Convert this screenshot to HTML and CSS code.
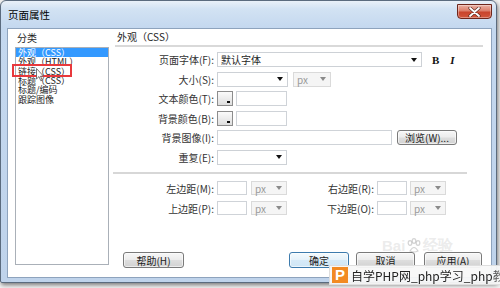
FILE: index.html
```html
<!DOCTYPE html>
<html>
<head>
<meta charset="utf-8">
<link rel="stylesheet" href="styles.css">
</head>
<body>
<div class="win">
  <div class="titlebar">
    <span class="title">页面属性</span>
    <div class="close">
      <svg width="13" height="10" viewBox="0 0 13 10"><path d="M2 1 L11 9 M11 1 L2 9" stroke="#5a2a22" stroke-width="3.2" stroke-linecap="round"/><path d="M2 1 L11 9 M11 1 L2 9" stroke="#fff" stroke-width="1.8" stroke-linecap="round"/></svg>
    </div>
  </div>
  <div class="client">
    <div class="leftcol">
      <div class="cat-label">分类</div>
      <div class="listbox">
        <div class="item sel">外观（CSS）</div>
        <div class="item">外观（HTML）</div>
        <div class="item">链接（CSS）</div>
        <div class="item">标题（CSS）</div>
        <div class="item">标题/编码</div>
        <div class="item">跟踪图像</div>
        <div class="redbox"></div>
        <svg class="cursor" width="8" height="14" viewBox="0 0 8 14"><path d="M0.5 0.5 L0.5 11 L3 8.6 L4.8 12.8 L6.2 12.2 L4.5 8.2 L7.5 8.2 Z" fill="#fff" stroke="#555" stroke-width="0.8"/></svg>
      </div>
    </div>
    <div class="rightcol">
      <div class="heading">外观（CSS）</div>
      <div class="rule"></div>
      <div class="rows">
        <div class="row">
          <span class="lbl">页面字体(F):</span>
          <div class="select w205"><span class="val">默认字体</span><span class="arrow"></span></div>
          <span class="fmt bold">B</span>
          <span class="fmt ital">I</span>
        </div>
        <div class="row">
          <span class="lbl">大小(S):</span>
          <div class="select w71"><span class="val"></span><span class="arrow"></span></div>
          <div class="select dis w38 ml5"><span class="val">px</span><span class="arrow"></span></div>
        </div>
        <div class="row">
          <span class="lbl">文本颜色(T):</span>
          <div class="swatch"><span class="dot"></span></div>
          <div class="input w51 ml3"></div>
        </div>
        <div class="row">
          <span class="lbl">背景颜色(B):</span>
          <div class="swatch"><span class="dot"></span></div>
          <div class="input w51 ml3"></div>
        </div>
        <div class="row">
          <span class="lbl">背景图像(I):</span>
          <div class="input w175"></div>
          <div class="btn browse">浏览(W)...</div>
        </div>
        <div class="row">
          <span class="lbl">重复(E):</span>
          <div class="select w70"><span class="val"></span><span class="arrow"></span></div>
        </div>
      </div>
      <div class="rule2"></div>
      <div class="mrows">
        <div class="mrow">
          <span class="lbl">左边距(M):</span>
          <div class="input w30"></div>
          <div class="select dis w36 ml4"><span class="val">px</span><span class="arrow"></span></div>
          <span class="lbl2">右边距(R):</span>
          <div class="input w30"></div>
          <div class="select dis w36 ml3"><span class="val">px</span><span class="arrow"></span></div>
        </div>
        <div class="mrow">
          <span class="lbl">上边距(P):</span>
          <div class="input w30"></div>
          <div class="select dis w36 ml4"><span class="val">px</span><span class="arrow"></span></div>
          <span class="lbl2">下边距(O):</span>
          <div class="input w30"></div>
          <div class="select dis w36 ml3"><span class="val">px</span><span class="arrow"></span></div>
        </div>
      </div>
      <div class="buttons">
        <div class="btn help">帮助(H)</div>
        <div class="btngroup">
          <div class="btn def ok">确定</div>
          <div class="btn cancel">取消</div>
          <div class="btn apply">应用(A)</div>
        </div>
      </div>
    </div>
  </div>
</div>
<div class="baidu">Bai<svg width="16" height="16" viewBox="0 0 16 16"><g fill="none" stroke="rgba(170,170,170,.5)" stroke-width="1.2"><ellipse cx="4" cy="5" rx="1.8" ry="2.4"/><ellipse cx="8" cy="3" rx="1.8" ry="2.4"/><ellipse cx="12" cy="5" rx="1.8" ry="2.4"/><path d="M4 13 Q8 6 12 13 Q8 15 4 13Z"/></g></svg>经验</div>
<div class="banner">
  <span class="plogo">P</span>
  <span class="btext">自学PHP网_php学习_php教</span>
</div>
</body>
</html>
```
FILE: styles.css
```css
* { box-sizing: border-box; margin: 0; padding: 0; }
body {
  width: 500px; height: 288px; overflow: hidden; position: relative;
  background: #f2f2f2;
  font-family: "Noto Sans CJK SC", "Noto Sans", sans-serif;
  font-size: 10px; color: #1e1e1e;
}
.win {
  width: 497px; height: 283px;
  border: 1px solid #5b6b7e;
  border-radius: 6px 6px 2px 2px;
  background: linear-gradient(180deg, #e9f0f8 0px, #d2e2f3 8px, #c4d8ef 27px, #bfd3eb 100%);
  box-shadow: 1px 2px 4px rgba(0,0,0,.5);
  display: flex; flex-direction: column;
}
.titlebar { height: 27px; display: flex; align-items: flex-start; padding-left: 7px; }
.title { font-size: 10.5px; line-height: 27px; color: #000; }
.close {
  margin-left: auto; margin-right: 4px; margin-top: 3px;
  width: 35px; height: 15px;
  border: 1px solid #6e261b; border-radius: 0 0 4px 4px;
  background: linear-gradient(180deg, #eab1a4 0%, #dc7e6a 45%, #c9442c 55%, #d2563b 100%);
  box-shadow: inset 0 0 0 1px rgba(255,255,255,.35);
  display: flex; align-items: center; justify-content: center;
}
.client {
  height: 250px; margin: 0 4px 0 6px;
  background: #fff; border: 1px solid #8ea3bd;
  display: flex;
}
.leftcol { margin-left: 7px; width: 94px; display: flex; flex-direction: column; }
.cat-label { height: 18px; line-height: 18px; padding-left: 2px; }
.listbox { position: relative; height: 218px; border: 1px solid #aab0b8; }
.item { height: 9.33px; line-height: 9.33px; font-size: 9px; padding-left: 2px; white-space: nowrap; color: #222; }
.item.sel { background: #3399ff; color: #fff; }
.redbox { position: absolute; left: -4px; top: 16px; width: 60px; height: 13px; border: 2px solid #e8393c; }
.cursor { position: absolute; left: 20px; top: 20px; }
.rightcol { margin-left: 6px; width: 368px; display: flex; flex-direction: column; }
.heading { height: 16px; line-height: 16px; padding-left: 2px; }
.rule { height: 2px; background: #d9d9d9; }
.rows { margin-top: 5px; display: flex; flex-direction: column; gap: 4.5px; }
.row { height: 15px; display: flex; align-items: center; }
.lbl { width: 102px; padding-right: 3px; text-align: right; white-space: nowrap; color: #333; }
.lbl2 { width: 90px; padding-right: 3px; text-align: right; white-space: nowrap; color: #333; }
.select {
  height: 100%; display: flex; align-items: center; justify-content: space-between;
  background: #fff; border: 1px solid #cdd1d6; padding: 0 4px 0 3px;
}
.select .val { line-height: 13px; }
.arrow { width: 0; height: 0; border-left: 3px solid transparent; border-right: 3px solid transparent; border-top: 4px solid #111; }
.select.dis { background: #f5f5f5; border-color: #dadada; color: #9a9a9a; }
.select.dis .arrow { border-top-color: #8a8a8a; }
.input { height: 100%; background: #fff; border: 1px solid #cfd3d8; }
.swatch {
  width: 16px; height: 15px; border: 1px solid #8d8d8d;
  background: linear-gradient(180deg, #fbfbfb, #dedede);
  display: flex; align-items: flex-end; justify-content: flex-end;
}
.swatch .dot { width: 3px; height: 2px; background: #111; margin: 0 2px 2px 0; }
.fmt { font-family: "Liberation Serif", serif; font-weight: bold; font-size: 11px; color: #111; }
.bold { margin-left: 10px; }
.ital { margin-left: 11px; font-style: italic; }
.w205 { width: 205px; } .w71 { width: 71px; } .w38 { width: 38px; } .w70 { width: 70px; }
.w51 { width: 51px; } .w175 { width: 175px; } .w30 { width: 30px; } .w36 { width: 36px; }
.ml5 { margin-left: 5px; } .ml3 { margin-left: 3px; } .ml4 { margin-left: 4px; }
.btn {
  height: 16px; display: flex; align-items: center; justify-content: center;
  border: 1px solid #7a7a7a; border-radius: 3px;
  background: linear-gradient(180deg, #f7f7f7 0%, #ececec 48%, #dedede 52%, #d2d2d2 100%);
  box-shadow: inset 0 0 0 1px rgba(255,255,255,.6);
  color: #222; white-space: nowrap;
}
.browse { width: 60px; height: 15px; margin-left: 5px; }
.rule2 { margin-top: 7.5px; margin-left: -2px; width: 354px; height: 2px; background: #d7d7d7; }
.mrows { margin-top: 7px; display: flex; flex-direction: column; gap: 6px; }
.mrow { height: 14px; display: flex; align-items: center; }
.buttons { margin-top: 37px; display: flex; padding-left: 8px; padding-right: 1px; }
.help { width: 61px; }
.btngroup { margin-left: auto; display: flex; }
.ok { width: 60px; }
.cancel { width: 59px; margin-left: 7px; }
.apply { width: 58px; margin-left: 9px; }
.btn.def {
  border-color: #3d7bad;
  background: linear-gradient(180deg, #f4fafd 0%, #e6f2fa 48%, #d6eaf7 52%, #cfe6f5 100%);
}
.baidu {
  position: absolute; left: 382px; top: 236px;
  font-family: "Liberation Sans", sans-serif; font-weight: bold; font-size: 15px;
  color: rgba(190,190,190,.3); display: flex; align-items: center; gap: 1px;
}
.banner {
  position: absolute; left: 329px; top: 265px; width: 171px; height: 20px;
  background: rgba(248,248,248,.95); border: 1px solid #dedede; border-right: none;
  display: flex; align-items: center; padding-left: 2px; overflow: hidden;
}
.plogo {
  width: 16px; height: 16px; flex: none; background: #f28a22; color: #fff;
  font-family: "Liberation Sans", sans-serif; font-weight: bold; font-size: 15px;
  line-height: 16px; text-align: center;
}
.btext {
  margin-left: 3px; font-size: 12px; color: #222; white-space: nowrap;
  -webkit-mask-image: linear-gradient(90deg, #000 90%, rgba(0,0,0,.35) 100%);
  mask-image: linear-gradient(90deg, #000 90%, rgba(0,0,0,.35) 100%);
}
```
